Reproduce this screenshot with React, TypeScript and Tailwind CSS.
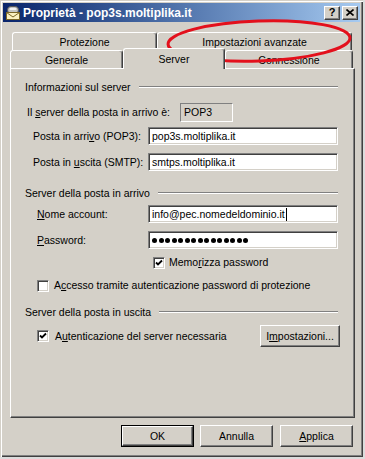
import type { ReactNode } from 'react';

const raised =
  'bg-[#d4d0c8] border border-t-white border-l-white border-r-[#404040] border-b-[#404040] shadow-[inset_-1px_-1px_#808080]';
const sunken =
  'border border-t-[#808080] border-l-[#808080] border-r-white border-b-white shadow-[inset_1px_1px_#404040,inset_-1px_-1px_#d4d0c8]';

function TitleBar() {
  return (
    <div className="flex h-[19px] w-full items-center bg-gradient-to-r from-[#0a246a] to-[#a6caf0] pl-[2px] pr-[2px]">
      <svg width="16" height="16" viewBox="0 0 16 16">
        <rect x="2.5" y="1.5" width="11" height="7" rx="3.5" fill="#c4c4c4" stroke="#5a5a5a" />
        <rect x="4.5" y="3" width="7" height="2" rx="1" fill="#f2f2f2" />
        <rect x="1.5" y="7.5" width="13" height="7" fill="#fbf0c0" stroke="#7a6526" />
        <path d="M1.5 7.5 L8 12 L14.5 7.5" stroke="#7a6526" fill="none" />
      </svg>
      <span className="ml-[2px] text-[12px] font-bold leading-none text-white">
        Proprietà - pop3s.moltiplika.it
      </span>
      <div className="ml-auto flex gap-[2px]">
        <div className={`${raised} flex h-[14px] w-[16px] items-center justify-center`}>
          <span className="text-[11px] font-bold leading-none text-black">?</span>
        </div>
        <div className={`${raised} flex h-[14px] w-[16px] items-center justify-center`}>
          <svg width="8" height="7" viewBox="0 0 8 7">
            <path d="M0.5 0.5 L7.5 6.5 M7.5 0.5 L0.5 6.5" stroke="black" strokeWidth="1.6" />
          </svg>
        </div>
      </div>
    </div>
  );
}

function Tab({ label, width, selected }: { label: string; width: string; selected?: boolean }) {
  return (
    <div
      className={`${width} ${
        selected ? 'relative z-10 -mb-[1px] h-[21px] pt-0' : 'h-[18px] pt-[2px]'
      } flex shrink-0 items-center justify-center rounded-t-[3px] border-l border-r border-t border-t-white border-l-white border-r-[#404040] bg-[#d4d0c8] shadow-[inset_-1px_0_#808080]`}
    >
      {label}
    </div>
  );
}

function SectionHeader({ label, mt }: { label: string; mt: string }) {
  return (
    <div className={`${mt} flex h-[14px] items-center pl-[14px] pr-[16px]`}>
      <span>{label}</span>
      <div className="ml-[8px] h-[2px] flex-1 border-t border-t-[#808080] border-b border-b-white" />
    </div>
  );
}

function Field({ children, mt, indent }: { children: ReactNode; mt: string; indent: string }) {
  return <div className={`${mt} ${indent} flex h-[18px] items-center`}>{children}</div>;
}

function Input({ children }: { children: ReactNode }) {
  return (
    <div className={`${sunken} flex h-[18px] w-[190px] items-center bg-white pl-[3px]`}>{children}</div>
  );
}

function Checkbox({ checked }: { checked?: boolean }) {
  return (
    <div className={`${sunken} flex h-[12px] w-[12px] shrink-0 items-center justify-center bg-white`}>
      {checked && (
        <svg width="8" height="8" viewBox="0 0 8 8">
          <path d="M1 3.5 L3 5.5 L7 1.5" stroke="black" strokeWidth="1.8" fill="none" />
        </svg>
      )}
    </div>
  );
}

function Button({ children, isDefault, width }: { children: ReactNode; isDefault?: boolean; width: string }) {
  const inner = (
    <div className={`${raised} flex h-full w-full items-center justify-center`}>{children}</div>
  );
  if (isDefault) {
    return <div className={`${width} h-[22px] border border-black`}>{inner}</div>;
  }
  return <div className={`${width} h-[22px]`}>{inner}</div>;
}

export default function App() {
  return (
    <div className="h-[459px] w-[365px] bg-[#dcdcdc] font-['Liberation_Sans',Arial,sans-serif] text-[10.5px] leading-none text-black">
      <div className="relative flex h-[457px] w-[363px] flex-col bg-[#d4d0c8] p-[3px] shadow-[inset_1px_1px_#d4d0c8,inset_2px_2px_#ffffff,inset_-1px_-1px_#404040,inset_-2px_-2px_#808080]">
        <TitleBar />

        <div className="ml-[7px] mt-[10px] w-[345px]">
          <div className="flex h-[18px] pl-[2px]">
            <Tab label="Protezione" width="w-[145px]" />
            <Tab label="Impostazioni avanzate" width="w-[195px]" />
          </div>
          <div className="-mt-[2px] flex h-[20px] items-end">
            <Tab label="Generale" width="w-[113px]" />
            <Tab label="Server" width="w-[102px]" selected />
            <Tab label="Connessione" width="w-[128px]" />
          </div>

          <div className="flex h-[350px] flex-col border border-t-white border-l-white border-r-[#404040] border-b-[#404040] shadow-[inset_-1px_-1px_#808080]">
            <SectionHeader label="Informazioni sul server" mt="mt-[11px]" />
            <div className="mt-[9px] flex h-[19px] items-center pl-[16px]">
              <span className="w-[153px]">
                Il <u className="underline-offset-1">s</u>erver della posta in arrivo è:
              </span>
              <div className="flex h-[19px] w-[53px] items-center border border-t-[#808080] border-l-[#808080] border-r-white border-b-white pl-[3px]">
                POP3
              </div>
            </div>
            <Field mt="mt-[5px]" indent="pl-[22px]">
              <span className="w-[115px]">
                Posta in arri<u className="underline-offset-1">v</u>o (POP3):
              </span>
              <Input>pop3s.moltiplika.it</Input>
            </Field>
            <Field mt="mt-[8px]" indent="pl-[22px]">
              <span className="w-[115px]">
                Posta in <u className="underline-offset-1">u</u>scita (SMTP):
              </span>
              <Input>smtps.moltiplika.it</Input>
            </Field>

            <SectionHeader label="Server della posta in arrivo" mt="mt-[15px]" />
            <Field mt="mt-[5px]" indent="pl-[26px]">
              <span className="w-[111px]">
                <u className="underline-offset-1">N</u>ome account:
              </span>
              <Input>
                info@pec.nomedeldominio.it
                <span className="ml-[1px] h-[13px] w-[1px] bg-black" />
              </Input>
            </Field>
            <Field mt="mt-[8px]" indent="pl-[26px]">
              <span className="w-[111px]">
                <u className="underline-offset-1">P</u>assword:
              </span>
              <Input>
                <div className="flex gap-[1.5px]">
                  {Array.from({ length: 15 }).map((_, i) => (
                    <span key={i} className="h-[5px] w-[5px] rounded-full bg-black" />
                  ))}
                </div>
              </Input>
            </Field>
            <div className="mt-[7px] flex h-[13px] items-center pl-[142px]">
              <Checkbox checked />
              <span className="ml-[4px]">
                Memo<u className="underline-offset-1">r</u>izza password
              </span>
            </div>
            <div className="mt-[10px] flex h-[13px] items-center pl-[26px]">
              <Checkbox />
              <span className="ml-[5px]">
                A<u className="underline-offset-1">c</u>cesso tramite autenticazione password di protezione
              </span>
            </div>

            <SectionHeader label="Server della posta in uscita" mt="mt-[13px]" />
            <div className="mt-[6px] flex h-[22px] items-center pl-[26px] pr-[14px]">
              <Checkbox checked />
              <span className="ml-[6px]">
                A<u className="underline-offset-1">u</u>tenticazione del server necessaria
              </span>
              <div className="ml-auto">
                <Button width="w-[80px]">
                  I<u className="underline-offset-1">m</u>postazioni...
                </Button>
              </div>
            </div>
          </div>
        </div>

        <div className="mt-[7px] flex pl-[118px]">
          <Button width="w-[73px]" isDefault>
            OK
          </Button>
          <div className="ml-[6px]">
            <Button width="w-[73px]">Annulla</Button>
          </div>
          <div className="ml-[7px]">
            <Button width="w-[73px]">
              <u className="underline-offset-1">A</u>pplica
            </Button>
          </div>
        </div>

        <svg
          className="pointer-events-none absolute left-0 top-0"
          width="365"
          height="80"
          viewBox="0 0 365 80"
        >
          <ellipse
            cx="259"
            cy="41"
            rx="91"
            ry="20"
            transform="rotate(-2 259 41)"
            fill="none"
            stroke="#e3101c"
            strokeWidth="3"
          />
        </svg>
      </div>
    </div>
  );
}
